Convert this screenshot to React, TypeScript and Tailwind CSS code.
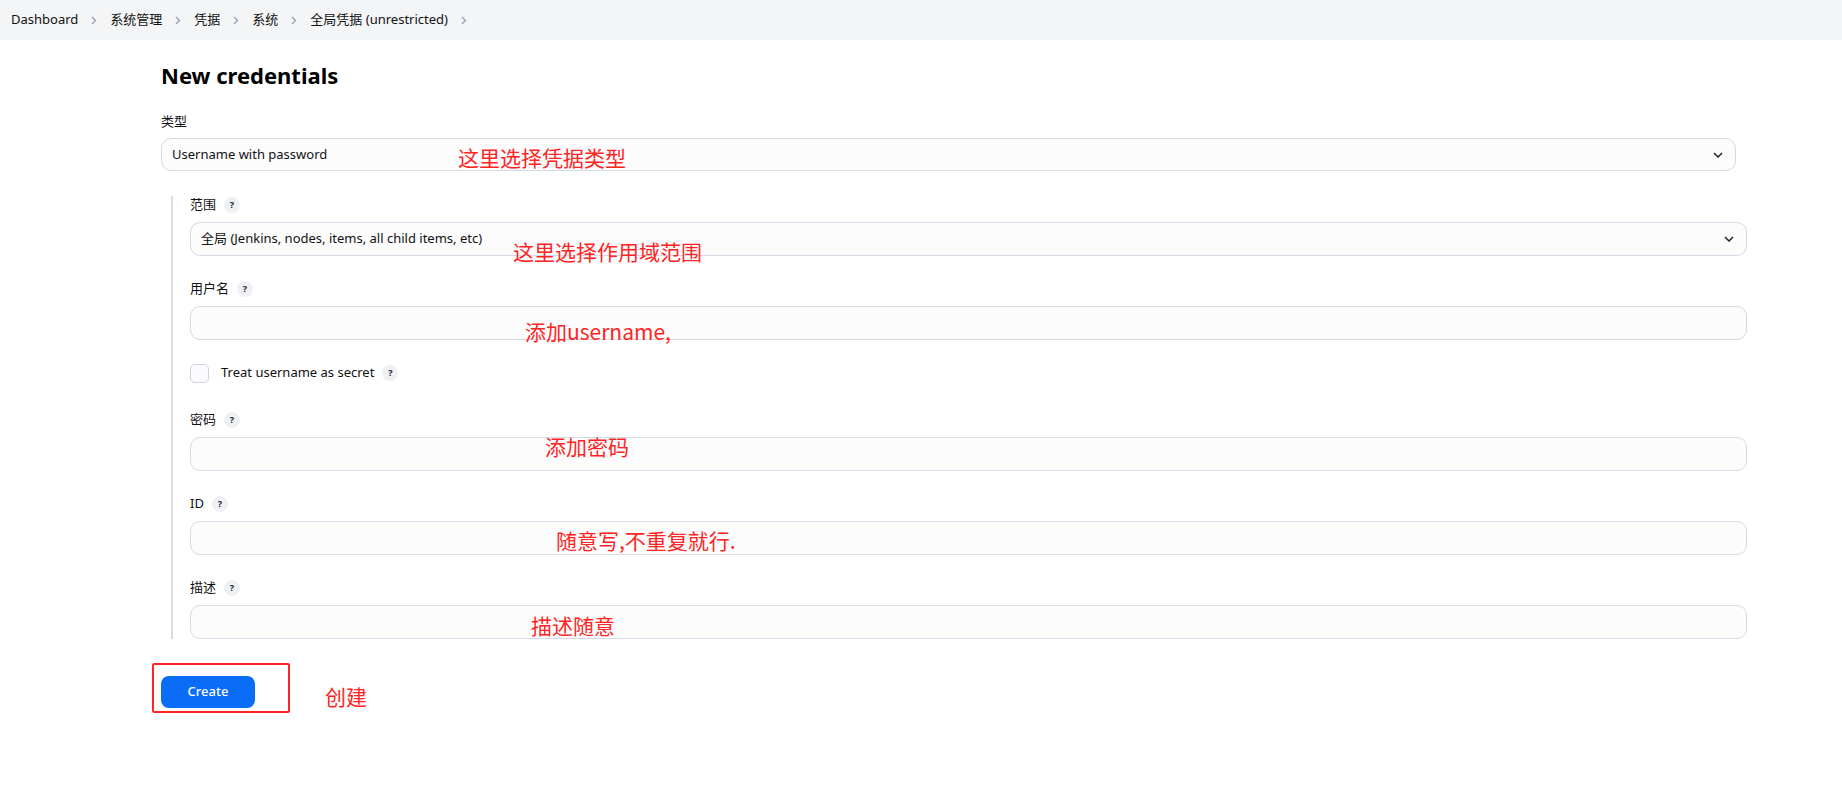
import React from 'react';

const crumbs = ['Dashboard', '系统管理', '凭据', '系统', '全局凭据 (unrestricted)'];

function Chevron() {
  return (
    <svg width="6" height="9" viewBox="0 0 6 9" className="shrink-0">
      <path d="M1 1l3.5 3.5L1 8" fill="none" stroke="#97a3bc" strokeWidth="1.4" />
    </svg>
  );
}

function Help() {
  return (
    <span className="ml-[8px] w-[16px] h-[16px] rounded-full bg-[#eef0f4] flex items-center justify-center text-[9px] font-bold text-[#222]">
      ?
    </span>
  );
}

function Label({ text, help = true }: { text: string; help?: boolean }) {
  return (
    <div className="h-[18px] flex items-center text-[13px] text-[#111]">
      <span>{text}</span>
      {help && <Help />}
    </div>
  );
}

function Select({ value, h = 'h-[34px]' }: { value: string; h?: string }) {
  return (
    <div
      className={`${h} mt-[8px] flex items-center justify-between rounded-[10px] border border-[#d3d9e5] bg-[#fcfcfd] pl-[10px] pr-[12px] text-[13px] text-[#111]`}
    >
      <span>{value}</span>
      <svg width="10" height="6" viewBox="0 0 10 6">
        <path d="M1 1l4 4 4-4" fill="none" stroke="#222" strokeWidth="1.5" />
      </svg>
    </div>
  );
}

function Input() {
  return <div className="h-[34px] mt-[8px] rounded-[10px] border border-[#d3d9e5] bg-[#fcfcfd]" />;
}

function Note({ text, className }: { text: string; className: string }) {
  return (
    <span
      className={`absolute text-[21px] leading-none text-[#ff2424] whitespace-nowrap ${className}`}
      style={{ fontFamily: '"Noto Sans CJK SC", "Noto Sans", sans-serif' }}
    >
      {text}
    </span>
  );
}

export default function App() {
  return (
    <div
      className="relative min-h-[804px] bg-white text-[#111]"
      style={{ fontFamily: '"Noto Sans", "Noto Sans CJK SC", sans-serif' }}
    >
      <nav className="h-[40px] bg-[#f4f5f7] flex items-center pl-[11px] gap-[13px] text-[13px] text-[#111]">
        {crumbs.map(c => (
          <React.Fragment key={c}>
            <span>{c}</span>
            <Chevron />
          </React.Fragment>
        ))}
      </nav>

      <main className="pl-[161px] pr-[106px]">
        <h1 className="mt-[21px] h-[28px] leading-[28px] text-[22px] font-bold text-black">New credentials</h1>

        <div className="mt-[24px]">
          <Label text="类型" help={false} />
          <div className="-mt-[1px]">
            <Select value="Username with password" h="h-[33px]" />
          </div>
        </div>

        <section className="mt-[25px] ml-[10px] -mr-[11px] border-l-2 border-[#d7dce6] pl-[17px]">
          <Label text="范围" />
          <Select value="全局 (Jenkins, nodes, items, all child items, etc)" />

          <div className="mt-[24px]">
            <Label text="用户名" />
            <Input />
          </div>

          <div className="mt-[23px] h-[20px] flex items-center text-[13px]">
            <span className="w-[19px] h-[19px] rounded-[5px] border border-[#ccd3df] bg-[#fbfbfd]" />
            <span className="ml-[12px]">Treat username as secret</span>
            <Help />
          </div>

          <div className="mt-[28px]">
            <Label text="密码" />
            <Input />
          </div>

          <div className="mt-[24px]">
            <Label text="ID" />
            <Input />
          </div>

          <div className="mt-[24px]">
            <Label text="描述" />
            <Input />
          </div>
        </section>

        <div className="relative mt-[37px] w-[94px]">
          <button className="w-[94px] h-[32px] rounded-[8px] bg-[#0b6cf8] text-white text-[13px] font-medium">
            Create
          </button>
          <span className="absolute left-[-9px] top-[-13px] w-[138px] h-[50px] border-2 border-[#ff2424] rounded-[2px]" />
        </div>
      </main>

      <Note text="这里选择凭据类型" className="left-[458px] top-[147px]" />
      <Note text="这里选择作用域范围" className="left-[513px] top-[241px]" />
      <Note text="添加username," className="left-[525px] top-[321px]" />
      <Note text="添加密码" className="left-[545px] top-[436px]" />
      <Note text="随意写,不重复就行." className="left-[556px] top-[530px]" />
      <Note text="描述随意" className="left-[531px] top-[615px]" />
      <Note text="创建" className="left-[325px] top-[686px]" />
    </div>
  );
}
